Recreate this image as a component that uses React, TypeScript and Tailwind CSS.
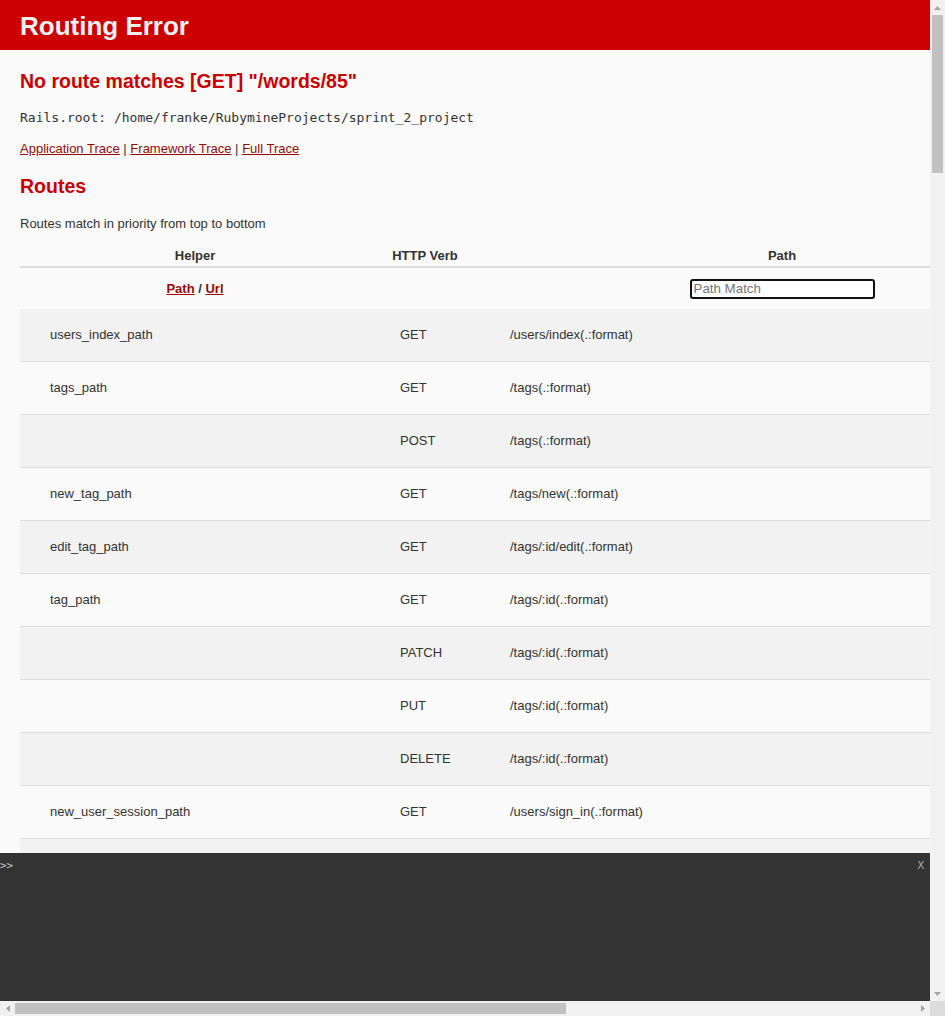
import React from "react";

type Route = {
  helper: string;
  verb: string;
  path: string;
};

const routes: Route[] = [
  { helper: "users_index_path", verb: "GET", path: "/users/index(.:format)" },
  { helper: "tags_path", verb: "GET", path: "/tags(.:format)" },
  { helper: "", verb: "POST", path: "/tags(.:format)" },
  { helper: "new_tag_path", verb: "GET", path: "/tags/new(.:format)" },
  { helper: "edit_tag_path", verb: "GET", path: "/tags/:id/edit(.:format)" },
  { helper: "tag_path", verb: "GET", path: "/tags/:id(.:format)" },
  { helper: "", verb: "PATCH", path: "/tags/:id(.:format)" },
  { helper: "", verb: "PUT", path: "/tags/:id(.:format)" },
  { helper: "", verb: "DELETE", path: "/tags/:id(.:format)" },
  { helper: "new_user_session_path", verb: "GET", path: "/users/sign_in(.:format)" },
  { helper: "", verb: "", path: "" },
];

function RouteRow({ route, index }: { route: Route; index: number }) {
  return (
    <div
      className={`flex h-[53px] items-center border-b border-[#dcdcdc] ${
        index % 2 === 0 ? "bg-[#f2f2f2]" : "bg-[#fafafa]"
      }`}
    >
      <div className="w-[350px] pl-[30px]">{route.helper}</div>
      <div className="w-[110px] pl-[30px]">{route.verb}</div>
      <div className="w-[604px] pl-[30px]">{route.path}</div>
      <div className="flex-1" />
    </div>
  );
}

function Triangle({ dir }: { dir: "up" | "down" | "left" | "right" }) {
  const shapes = {
    up: "M0 4 L3.5 0 L7 4 Z",
    down: "M0 0 L7 0 L3.5 4 Z",
    left: "M4 0 L4 7 L0 3.5 Z",
    right: "M0 0 L4 3.5 L0 7 Z",
  };
  const vertical = dir === "up" || dir === "down";
  return (
    <svg width={vertical ? 7 : 4} height={vertical ? 4 : 7} viewBox={vertical ? "0 0 7 4" : "0 0 4 7"}>
      <path d={shapes[dir]} fill="#a3a3a3" />
    </svg>
  );
}

export default function App() {
  return (
    <div className="flex h-[1016px] w-[945px] flex-col overflow-hidden font-['Liberation_Sans',Arial,sans-serif] text-[13px] text-[#333333]">
      <div className="flex h-[1001px]">
        {/* page viewport */}
        <div className="relative h-[1001px] w-[930px] overflow-hidden bg-[#fafafa]">
          <div className="w-[1519px]">
            <header className="h-[50px] bg-[#cc0000] px-5 pt-[11px]">
              <h1 className="text-[26px] font-bold leading-[30px] text-[#f0f0f0]">Routing Error</h1>
            </header>

            <main className="px-5">
              <h2 className="mt-[19px] text-[19.5px] font-bold leading-[24px] text-[#cc0000]">
                No route matches [GET] "/words/85"
              </h2>
              <p className="mt-[17px] font-['DejaVu_Sans_Mono',monospace] text-[13px] leading-4">
                Rails.root: /home/franke/RubymineProjects/sprint_2_project
              </p>
              <div className="mt-[15px] leading-4">
                <a className="text-[#980905] underline">Application Trace</a> |{" "}
                <a className="text-[#980905] underline">Framework Trace</a> |{" "}
                <a className="text-[#980905] underline">Full Trace</a>
              </div>

              <h2 className="mt-[17px] text-[19.5px] font-bold leading-[24px] text-[#cc0000]">Routes</h2>
              <p className="mt-[18px] leading-4">Routes match in priority from top to bottom</p>

              <div className="mt-4">
                <div className="flex border-b-2 border-[#dcdcdc] pb-[2px] font-bold leading-4">
                  <div className="w-[350px] text-center">Helper</div>
                  <div className="w-[110px] text-center">HTTP Verb</div>
                  <div className="w-[604px] text-center">Path</div>
                  <div className="flex-1" />
                </div>
                <div className="flex h-[41px] items-center">
                  <div className="w-[350px] text-center font-bold">
                    <a className="text-[#980905] underline">Path</a> /{" "}
                    <a className="text-[#980905] underline">Url</a>
                  </div>
                  <div className="w-[110px]" />
                  <div className="flex w-[604px] justify-center">
                    <input
                      placeholder="Path Match"
                      className="h-5 w-[185px] rounded-[3px] border-2 border-[#111111] bg-white px-[2px] text-[13.33px] text-[#333] outline-none placeholder:text-[#757575]"
                    />
                  </div>
                  <div className="flex-1" />
                </div>
                {routes.map((route, i) => (
                  <RouteRow key={i} route={route} index={i} />
                ))}
              </div>
            </main>
          </div>

          {/* web console, fixed to the bottom of the page */}
          <div className="absolute bottom-0 left-0 h-[148px] w-[930px] bg-[#333333] font-['DejaVu_Sans_Mono',monospace] text-[11px] text-[#cccccc]">
            <div className="flex justify-between pt-[6px] leading-[14px]">
              <span>&gt;&gt;</span>
              <span className="pr-[6px] text-[#aaaaaa]">X</span>
            </div>
          </div>
        </div>

        {/* vertical scrollbar */}
        <div className="flex w-[15px] flex-col items-center bg-[#f1f1f1]">
          <div className="flex h-[15px] items-center justify-center">
            <Triangle dir="up" />
          </div>
          <div className="h-[158px] w-[11px] bg-[#c1c1c1]" />
          <div className="flex-1" />
          <div className="flex h-[15px] items-center justify-center">
            <Triangle dir="down" />
          </div>
        </div>
      </div>

      {/* horizontal scrollbar */}
      <div className="flex h-[15px]">
        <div className="flex w-[930px] items-center bg-[#f1f1f1]">
          <div className="flex w-[15px] justify-center">
            <Triangle dir="left" />
          </div>
          <div className="h-[11px] w-[551px] bg-[#c1c1c1]" />
          <div className="flex-1" />
          <div className="flex w-[15px] justify-center">
            <Triangle dir="right" />
          </div>
        </div>
        <div className="w-[15px] bg-[#dcdcdc]" />
      </div>
    </div>
  );
}
